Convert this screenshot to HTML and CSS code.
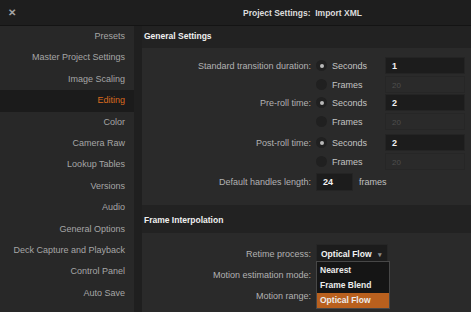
FILE: index.html
```html
<!DOCTYPE html>
<html lang="en">
<head>
  <meta charset="UTF-8" />
  <title>Project Settings: Import XML</title>
  <link rel="stylesheet" href="styles.css">
</head>
<body>
  <!-- Title Bar -->
  <header class="titlebar">
    <span class="close">&#x2715;</span>
    <span class="title">Project Settings:&nbsp; Import XML</span>
  </header>

  <div class="window">
    <!-- Sidebar -->
    <nav class="sidebar">
      <a class="nav-item">Presets</a>
      <a class="nav-item">Master Project Settings</a>
      <a class="nav-item">Image Scaling</a>
      <a class="nav-item active">Editing</a>
      <a class="nav-item">Color</a>
      <a class="nav-item">Camera Raw</a>
      <a class="nav-item">Lookup Tables</a>
      <a class="nav-item">Versions</a>
      <a class="nav-item">Audio</a>
      <a class="nav-item">General Options</a>
      <a class="nav-item">Deck Capture and Playback</a>
      <a class="nav-item">Control Panel</a>
      <a class="nav-item">Auto Save</a>
    </nav>

    <!-- Settings Content -->
    <main class="content">
      <h2 class="section-title">General Settings</h2>
      <section class="panel general">
        <div class="row">
          <span class="label">Standard transition duration:</span>
          <span class="option"><i class="radio on"></i>Seconds</span>
          <span class="field">1</span>
        </div>
        <div class="row">
          <span class="label"></span>
          <span class="option"><i class="radio"></i>Frames</span>
          <span class="field disabled">20</span>
        </div>
        <div class="row group">
          <span class="label">Pre-roll time:</span>
          <span class="option"><i class="radio on"></i>Seconds</span>
          <span class="field">2</span>
        </div>
        <div class="row">
          <span class="label"></span>
          <span class="option"><i class="radio"></i>Frames</span>
          <span class="field disabled">20</span>
        </div>
        <div class="row group wide">
          <span class="label">Post-roll time:</span>
          <span class="option"><i class="radio on"></i>Seconds</span>
          <span class="field">2</span>
        </div>
        <div class="row">
          <span class="label"></span>
          <span class="option"><i class="radio"></i>Frames</span>
          <span class="field disabled">20</span>
        </div>
        <div class="row handles">
          <span class="label">Default handles length:</span>
          <span class="field short">24</span>
          <span class="unit">frames</span>
        </div>
      </section>

      <h2 class="section-title">Frame Interpolation</h2>
      <section class="panel interp">
        <div class="row tall">
          <span class="label">Retime process:</span>
          <div class="select">
            <span class="select-box">Optical Flow <b class="caret">&#x25BE;</b></span>
            <ul class="menu">
              <li>Nearest</li>
              <li>Frame Blend</li>
              <li class="selected">Optical Flow</li>
            </ul>
          </div>
        </div>
        <div class="row tall">
          <span class="label">Motion estimation mode:</span>
        </div>
        <div class="row tall">
          <span class="label">Motion range:</span>
        </div>
      </section>
    </main>
  </div>
</body>
</html>
```

FILE: styles.css
```css
/* Global */
* {
  margin: 0;
  padding: 0;
  box-sizing: border-box;
}
html, body {
  width: 471px;
  height: 312px;
  overflow: hidden;
}
body {
  font-family: 'Liberation Sans', Arial, sans-serif;
  font-size: 9px;
  color: #b2b2b2;
  background: #1d1d1d;
}

/* Title Bar */
.titlebar {
  display: flex;
  align-items: center;
  height: 26px;
  padding-left: 8px;
  background: #1e1e1e;
  border-bottom: 1px solid #141414;
}
.close {
  width: 126px;
  color: #a5a5a5;
  font-weight: bold;
  font-size: 10px;
}
.title {
  flex: 1;
  text-align: center;
  color: #dcdcdc;
  font-weight: bold;
  font-size: 8.5px;
}

.window {
  display: flex;
  height: 286px;
}

/* Sidebar */
.sidebar {
  width: 134px;
  background: #282828;
  display: flex;
  flex-direction: column;
}
.nav-item {
  height: 21.4px;
  line-height: 21.4px;
  padding-right: 9px;
  text-align: right;
  color: #a6a6a6;
}
.nav-item.active {
  background: #1b1b1b;
  color: #d96a1f;
}

/* Content */
.content {
  flex: 1;
  padding-left: 8px;
  background: #1f1f1f;
}
.section-title {
  height: 22px;
  line-height: 21px;
  padding-left: 2px;
  font-size: 8.5px;
  color: #f0f0f0;
  background: #222;
}
.content .section-title:nth-of-type(2) {
  height: 28px;
  line-height: 30px;
}
.panel {
  background: #2a2a2a;
}
.general {
  height: 157px;
  padding-top: 9px;
}
.interp {
  height: 79px;
  padding-top: 11px;
}

/* Rows */
.row {
  display: flex;
  align-items: center;
  height: 17px;
  margin-bottom: 2px;
}
.row.group {
  margin-top: -1px;
}
.row.wide {
  margin-top: 4px;
}
.row.handles {
  margin-top: 3px;
}
.row.tall {
  height: 19px;
}
.label {
  width: 169px;
  margin-right: 5px;
  text-align: right;
}
.option {
  display: flex;
  align-items: center;
  width: 69px;
  color: #c4c4c4;
}
.radio {
  position: relative;
  width: 11px;
  height: 11px;
  margin-right: 5px;
  border-radius: 50%;
  background: #202020;
}
.radio.on::after {
  content: "";
  position: absolute;
  top: 3.5px;
  left: 3.5px;
  width: 4px;
  height: 4px;
  border-radius: 50%;
  background: #b9b9b9;
}
.field {
  width: 80px;
  height: 17px;
  line-height: 17px;
  padding-left: 6px;
  background: #1c1c1c;
  border: 1px solid #242424;
  color: #f2f2f2;
  font-weight: bold;
}
.field.disabled {
  background: #2a2a2a;
  border-color: #262626;
  color: #4e4e4e;
  font-weight: normal;
  font-size: 8px;
}
.field.short {
  width: 37px;
  height: 18px;
}
.unit {
  margin-left: 6px;
  color: #c0c0c0;
}

/* Dropdown */
.select {
  position: relative;
}
.select-box {
  display: block;
  width: 72px;
  height: 19px;
  line-height: 19px;
  padding-left: 4px;
  background: #1c1c1c;
  border: 1px solid #262626;
  color: #f4f4f4;
  font-weight: bold;
  font-size: 8.5px;
}
.caret {
  margin-left: 4px;
  color: #8a8a8a;
  font-size: 7px;
}
.menu {
  position: absolute;
  top: 17px;
  left: 0;
  width: 74px;
  padding-top: 1px;
  list-style: none;
  background: #151515;
  border: 1px solid #474747;
  z-index: 2;
}
.menu li {
  height: 15px;
  line-height: 15px;
  padding-left: 3px;
  color: #ececec;
  font-weight: bold;
  font-size: 8.5px;
}
.menu li.selected {
  background: #b9601e;
}
```
